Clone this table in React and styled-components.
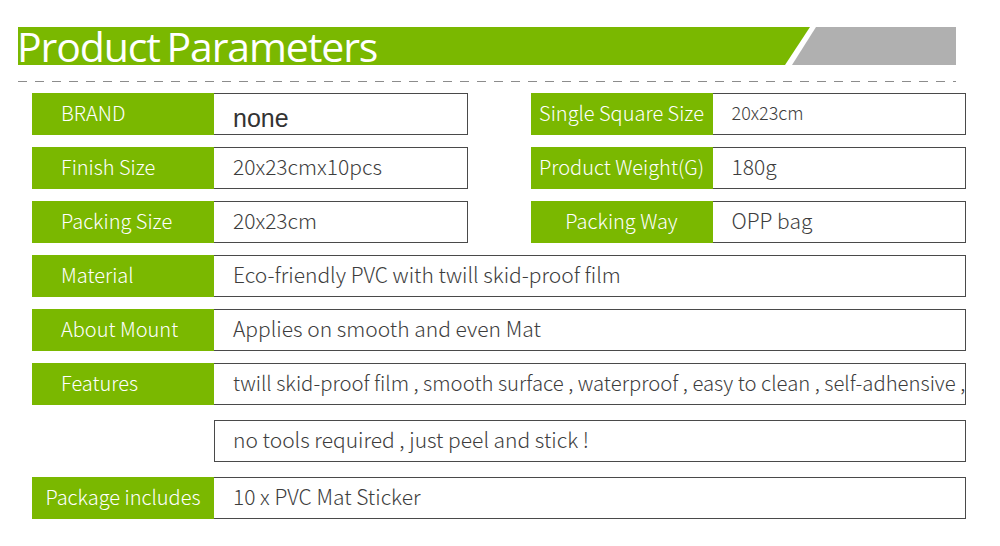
import React from 'react';
import styled, { createGlobalStyle } from 'styled-components';

const GREEN = '#7ab800';
const GRAY = '#b0b0b0';
const BORDER = '#4a4a4a';
const FONT = '"Noto Sans CJK SC", "Noto Sans", sans-serif';

const GlobalStyle = createGlobalStyle`
  html, body {
    margin: 0;
    padding: 0;
    background: #fff;
  }
  body {
    font-family: ${FONT};
  }
`;

const Page = styled.div`
  width: 1000px;
  height: 546px;
  padding-top: 27px;
  box-sizing: border-box;
  overflow: hidden;
`;

const Header = styled.div`
  display: flex;
  margin-left: 18px;
  width: 938px;
  height: 38px;
`;

const TitleBand = styled.div`
  width: 792px;
  flex-shrink: 0;
  background: ${GREEN};
  clip-path: polygon(0 0, 100% 0, calc(100% - 25px) 100%, 0 100%);
  display: flex;
  align-items: center;
`;

const Title = styled.h1`
  margin: 0;
  color: #fff;
  font-family: "Open Sans", ${FONT};
  font-weight: 400;
  font-size: 41px;
  letter-spacing: -1.1px;
  word-spacing: -3px;
  line-height: 38px;
  white-space: nowrap;
  position: relative;
  top: 0px;
  left: -1px;
`;

const GrayBand = styled.div`
  flex: 1;
  margin-left: -18px;
  background: ${GRAY};
  clip-path: polygon(24px 0, 100% 0, 100% 100%, 0 100%);
`;

const Dashes = styled.div`
  margin: 16px 0 0 18px;
  width: 938px;
  height: 1px;
  background-image: repeating-linear-gradient(
    to right,
    #8c8c8c 0,
    #8c8c8c 9px,
    transparent 9px,
    transparent 17px
  );
`;

const Rows = styled.div`
  margin: 11px 0 0 32px;
  width: 934px;
  display: flex;
  flex-direction: column;
  gap: 12px;
`;

const Row = styled.div`
  display: flex;
  gap: 63px;
  margin-top: ${props => props.$extra || 0}px;
`;

const Pair = styled.div`
  display: flex;
  flex: 1;
  height: 42px;
`;

const Label = styled.div`
  width: 182px;
  flex-shrink: 0;
  background: ${GREEN};
  color: #fff;
  font-size: 20px;
  font-weight: 300;
  display: flex;
  align-items: center;
  justify-content: ${props => (props.$center ? 'center' : 'flex-start')};
  padding-left: ${props => (props.$center ? 0 : 29)}px;
  padding-bottom: 4px;
  box-sizing: border-box;
  white-space: nowrap;
`;

const Spacer = styled.div`
  width: 182px;
  flex-shrink: 0;
`;

const Value = styled.div`
  flex: 1;
  border: 1px solid ${BORDER};
  border-left: ${props => (props.$open ? `1px solid ${BORDER}` : 'none')};
  display: flex;
  align-items: center;
  padding-left: ${props => (props.$open ? 18 : 19)}px;
  padding-bottom: 4px;
  box-sizing: border-box;
  color: #3d3d3d;
  font-size: ${props => props.$size || 21}px;
  font-weight: 300;
  white-space: nowrap;
`;

const Plain = styled.span`
  font-family: "Liberation Sans", Arial, sans-serif;
  font-size: 25px;
  font-weight: 400;
  color: #333;
  position: relative;
  top: 6px;
`;

const Field = ({ label, center, size, children }) => (
  <Pair>
    <Label $center={center}>{label}</Label>
    <Value $size={size}>{children}</Value>
  </Pair>
);

export default function App() {
  return (
    <Page>
      <GlobalStyle />
      <Header>
        <TitleBand>
          <Title>Product Parameters</Title>
        </TitleBand>
        <GrayBand />
      </Header>
      <Dashes />
      <Rows>
        <Row>
          <Field label="BRAND">
            <Plain>none</Plain>
          </Field>
          <Field label="Single Square Size" center size={18}>
            20x23cm
          </Field>
        </Row>
        <Row>
          <Field label="Finish Size">20x23cmx10pcs</Field>
          <Field label="Product Weight(G)" center>
            180g
          </Field>
        </Row>
        <Row>
          <Field label="Packing Size">20x23cm</Field>
          <Field label="Packing Way" center>
            OPP bag
          </Field>
        </Row>
        <Row>
          <Field label="Material">Eco-friendly PVC with twill skid-proof film</Field>
        </Row>
        <Row>
          <Field label="About Mount">Applies on smooth and even Mat</Field>
        </Row>
        <Row>
          <Field label="Features" size={20.3}>
            twill skid-proof film , smooth surface , waterproof , easy to clean , self-adhensive ,
          </Field>
        </Row>
        <Row $extra={3}>
          <Pair>
            <Spacer />
            <Value $open>no tools required , just peel and stick !</Value>
          </Pair>
        </Row>
        <Row $extra={3}>
          <Field label="Package includes" center>
            10 x PVC Mat Sticker
          </Field>
        </Row>
      </Rows>
    </Page>
  );
}
